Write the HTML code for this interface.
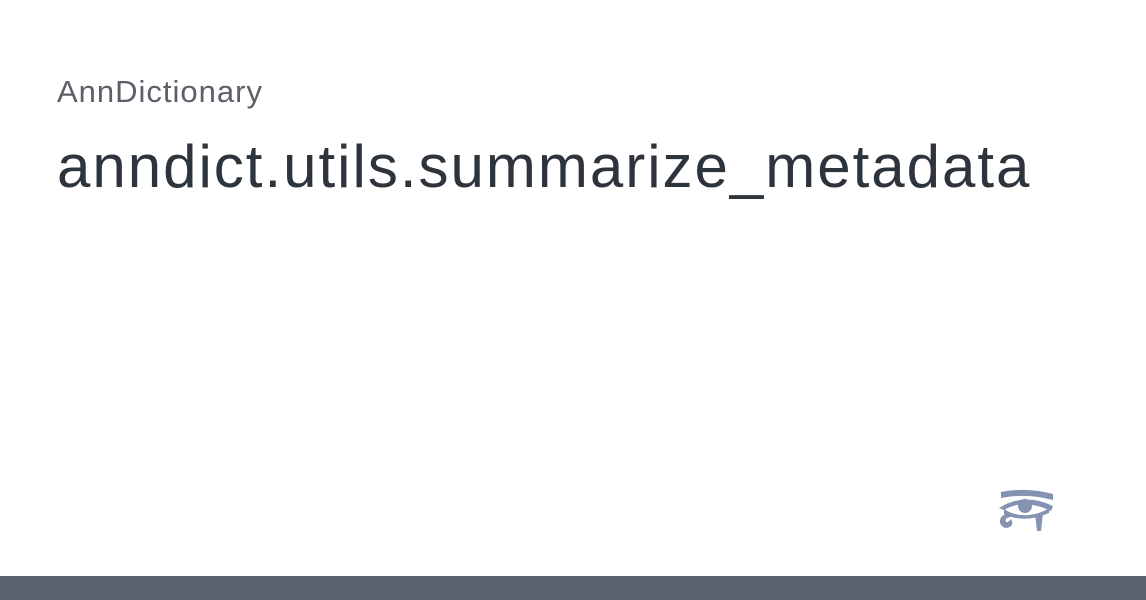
<!DOCTYPE html>
<html><head><style>
body{margin:0;width:1146px;height:600px;background:#fff;position:relative;overflow:hidden;font-family:"Liberation Sans",sans-serif}
.s{position:absolute;left:57px;top:74px;font-size:31px;color:#5b6068;letter-spacing:1px}
.t{position:absolute;left:57px;top:132px;font-size:60px;color:#2e343c;letter-spacing:2px}
.bar{position:absolute;left:0;top:576px;width:1146px;height:24px;background:#5c6370}
svg{position:absolute;left:996px;top:488px}
</style></head><body>
<div class="s">AnnDictionary</div>
<div class="t">anndict.utils.summarize_metadata</div>
<svg width="60" height="46" viewBox="0 0 60 46" fill="#8593b2">
<path d="M5 4 Q30 -1 57 6 L57 12 Q30 5 5 10 Z"/>
<path d="M3 20 Q28 4 57 18 L55 23 Q28 10 8 22 Z"/>
<path d="M8 21 Q28 34 54 20 L53 25 Q28 36 8 26 Z"/>
<circle cx="29" cy="18" r="7"/>
<path d="M15 25 Q3 26 4 35 Q7 42 14 39 Q18 36 15 31 Q12 35 10 34 Q8 30 15 29 Z"/>
<path d="M39 26 L47 25 L45 43 L41 43 Z"/>
</svg>
<div class="bar"></div>
</body></html>
